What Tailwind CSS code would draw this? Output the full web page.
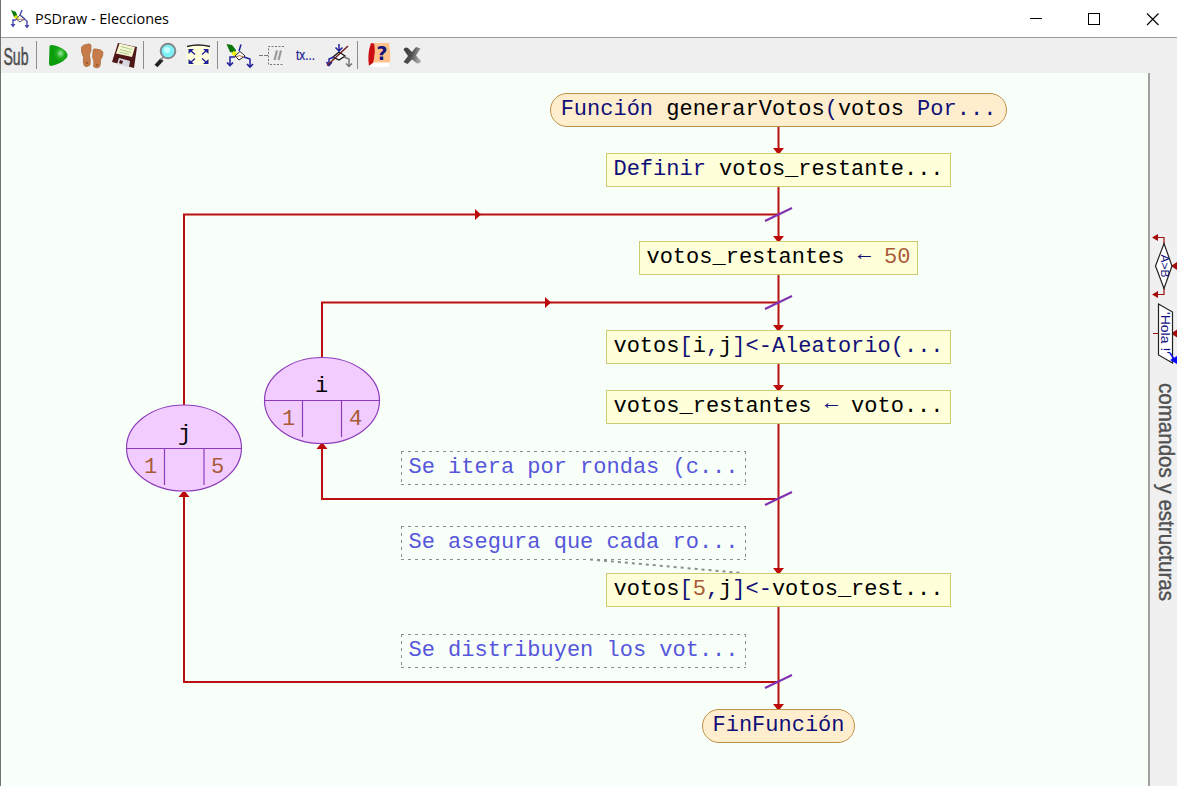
<!DOCTYPE html>
<html lang="es">
<head>
<meta charset="utf-8">
<title>PSDraw - Elecciones</title>
<script src="https://cdn.jsdelivr.net/npm/@tailwindcss/browser@4"></script>
</head>
<body class="w-[1177px] h-[786px] overflow-hidden bg-white">
<div class="flex flex-col h-[786px] border-l border-[#6f7472]">
  <header class="h-[37px] shrink-0 flex items-center bg-white">
    <svg class="ml-[9px] w-5 h-5" viewBox="10 8 20 20" fill="none">
      <path d="M11 9 L16 11 L18 17 L14 16 Z" fill="#087a08"/><path d="M15 15 L18 18" stroke="#e5e500" stroke-width="3"/>
      <path d="M16 19 H13 V24 M24 18 L27 20 V25 M22 9 L20 14 L25 18" stroke="#4848b0" stroke-width="1.4"/>
      <path d="M16 18 L20 14 L24 18 L20 21 Z" stroke="#555580"/><path d="M17 19 Q20 17 24 19" stroke="#b08060"/>
      <path d="M10.500 23 H15.500 L13 26.500 Z M24.500 24 H29.500 L27 27.500 Z" fill="#4848b0"/>
    </svg>
    <h1 class="ml-[5px] w-[138px] text-black font-['Open_Sans',sans-serif]"><svg class="block overflow-visible" width="138" height="20"><text x="0" y="15" font-size="15" textLength="134" lengthAdjust="spacingAndGlyphs">PSDraw - Elecciones</text></svg></h1>
    <div class="ml-auto flex">
      <svg class="w-[58px] h-9" viewBox="1007 0 58 36"><path d="M1030 17.5 H1042" stroke="#000"/></svg>
      <svg class="w-[58px] h-9" viewBox="1065 0 58 36"><rect x="1088.5" y="12.5" width="11" height="11" fill="none" stroke="#000"/></svg>
      <svg class="w-[54px] h-9" viewBox="1123 0 54 36"><path d="M1147 12.500 L1158.500 24 M1158.500 12.500 L1147 24" stroke="#000" stroke-width="1.1"/></svg>
    </div>
  </header>

  <nav class="h-9 shrink-0 flex bg-[#efefef] border-t border-[#999d99]">
    <svg class="w-[34px] h-[35px] overflow-visible" viewBox="1 38 34 35"><text x="3.500" y="64.500" font-family="Liberation Sans, sans-serif" font-size="23" fill="#4c4c4c" stroke="#4c4c4c" stroke-width=".5" textLength="25" lengthAdjust="spacingAndGlyphs">Sub</text></svg>
    <div class="ml-px w-px h-7 mt-[3px] bg-[#8c8c8c]"></div>
    <svg class="w-[36px] h-[35px]" viewBox="37 38 36 35">
      <defs><radialGradient id="play" cx=".62" cy=".4" r=".4"><stop offset="0" stop-color="#a0e8a0"/><stop offset=".55" stop-color="#1fae1f"/><stop offset="1" stop-color="#0c9d0c"/></radialGradient></defs>
      <path d="M49.500 47 Q49 45 52 45 Q60 46 65.500 51 Q69 55 66.500 58 Q61 64 51 66 Q49 66 49 63 Z" fill="url(#play)"/>
    </svg>
    <svg class="w-[34px] h-[35px]" viewBox="73 38 34 35" fill="#c77b4a" stroke="#a35f34" stroke-width=".6">
      <path d="M81.500 47 Q83 44.500 86 44.500 Q89.500 43 91 45 Q92 50 89.500 55 Q91 61 90 65 Q87 68 84.500 66 Q82.500 63 83.500 57 Q80.500 52 81.500 47Z"/>
      <path d="M93 51 Q93 48 96 49 Q101 49 103 52 Q103.500 56 100.500 60 Q101 64 99.500 67 Q96 69 93.500 66.500 Q94.500 61 92.500 57Z"/>
      <circle cx="87" cy="63" r="1" fill="#8e4e2a"/><circle cx="97" cy="65" r="1" fill="#8e4e2a"/>
    </svg>
    <svg class="w-[36px] h-[35px]" viewBox="107 38 36 35">
      <path d="M118 43 L137 47 L134 68 L112 62 Z" fill="#4d1717"/><path d="M119.500 43.500 L135 47 L132 57 L116 53.500 Z" fill="#f6f5d2"/>
      <path d="M121 46.500 L132 49.500 M120 49.500 L131 52.500 M119.500 52 L129 54.500" stroke="#aecb91"/><path d="M119 58 L130 61 L129 67 L117 64 Z" fill="#d8d8e0"/><path d="M120 60 L123 61 L122 64 L119 63Z" fill="#4d1717"/>
    </svg>
    <div class="w-px h-7 mt-[3px] bg-[#8c8c8c]"></div>
    <svg class="w-[36px] h-[35px]" viewBox="144 38 36 35">
      <path d="M162 59.500 L156 66" stroke="#222" stroke-width="4"/><path d="M164 56 L161 60" stroke="#999" stroke-width="2"/>
      <circle cx="168" cy="51" r="7.300" fill="#7df2f6" stroke="#85878c" stroke-width="2"/><circle cx="167" cy="50" r="3" fill="#c4ffff"/>
    </svg>
    <svg class="w-[37px] h-[35px]" viewBox="180 38 37 35">
      <path d="M187 46.500 Q198 43.500 210 46.500 V65 H187Z" fill="#ffffdc"/><path d="M187 46.500 Q198 43.500 210 46.500" fill="none" stroke="#222" stroke-width="1.500"/>
      <path d="M195 54.500 L190 50 M202 54.500 L207 50 M195 58.500 L190 63 M202 58.500 L207 63" stroke="#20209a" stroke-width="1.300"/>
      <path d="M188.500 49h5.500l-5.500 5zM208.500 49h-5.500l5.500 5zM188.500 64h5.500l-5.500-5zM208.500 64h-5.500l5.500-5z" fill="#20209a"/>
    </svg>
    <div class="w-px h-7 mt-[3px] bg-[#8c8c8c]"></div>
    <svg class="w-[38px] h-[35px]" viewBox="218 38 38 35" fill="none">
      <path d="M226.500 44 L232 45 L236 50 L235 53 L230 52 Z" fill="#087608"/><path d="M232.500 52.500 L236.500 55" stroke="#f1ed15" stroke-width="4"/>
      <path d="M235 56 L240 51.500 L245 56 L239 60 Z" fill="#fff" stroke="#222"/><path d="M236 57 Q240 54 243 57" stroke="#b86533"/>
      <path d="M241 44.500 L239 51 M235 57 H230 V64 M244 57 L250 59 V66" stroke="#20209a" stroke-width="1.500"/><path d="M227 62.500 L230 65.500 L233 62.500 M247 64 L250 67 L253 64" stroke="#20209a" stroke-width="1.700"/>
    </svg>
    <svg class="w-[33px] h-[35px]" viewBox="256 38 33 35" fill="none" stroke="#777">
      <path d="M259 55.500 H268" stroke-dasharray="4 1"/><path d="M284 46.500 H268.500 V64.500 H284" stroke-dasharray="2 1.500"/><path d="M277 50.500 L274.500 60 M281 50.500 L278.500 60" stroke="#9b9b9b" stroke-width="2.200"/>
    </svg>
    <svg class="w-[33px] h-[35px] overflow-visible" viewBox="289 38 33 35"><text x="296" y="60" font-family="Liberation Sans, sans-serif" font-size="14" fill="#20208a" stroke="#20208a" stroke-width=".2" textLength="19" lengthAdjust="spacingAndGlyphs">tx...</text></svg>
    <svg class="w-[35px] h-[35px]" viewBox="322 38 35 35" fill="none">
      <path d="M333 57 L339 52 L345 56 L339 60 Z" fill="#fff" stroke="#111" stroke-width="1.300"/><path d="M339 44 V50 M335.500 47.500 L339 51 L342.500 47.500 M334 57 L329 59 V64 M326.500 62 L329 65.500 L332 62" stroke="#20209a" stroke-width="1.500"/>
      <path d="M344 57 L349 59 V66 M346 63.500 L349 66.500 L352 63.500" stroke="#777" stroke-width="1.500"/><path d="M327 65.500 L348 46" stroke="#6d2020" stroke-width="1.500"/>
    </svg>
    <div class="w-px h-7 mt-[3px] bg-[#8c8c8c]"></div>
    <svg class="w-[36px] h-[35px]" viewBox="358 38 36 35">
      <path d="M371 43 Q367 54 369 66 L374 62 L376 44 Z" fill="#c90d10"/><path d="M374 43 H389 Q391 53 390 63 H373 Q376 53 374 43Z" fill="#ffc28d"/><path d="M369 66 L374 62.500 H390 L388 67 H370Z" fill="#fff"/>
      <text x="376.500" y="60" font-family="DejaVu Sans, sans-serif" font-size="19" font-weight="700" fill="#12127e">?</text>
    </svg>
    <svg class="w-[36px] h-[35px]" viewBox="394 38 36 35">
      <defs><linearGradient id="close" x1="0" y1="0" x2="1" y2=".3"><stop stop-color="#3a3a3a"/><stop offset=".55" stop-color="#505050"/><stop offset="1" stop-color="#a5a5a5"/></linearGradient></defs>
      <path d="M403.500 49.500 Q405 46.500 408 48 L412 52 L416 47 L420.500 48.500 L416 55.500 L421 61 Q420 64 417 63.500 L412 59.500 L407.500 64 L403.500 62 L408 56 Z" fill="url(#close)"/>
    </svg>
  </nav>

  <div class="flex-1 min-h-0 flex">
    <main class="relative flex-1 bg-[#f8fff8] font-['Liberation_Mono',monospace] text-[22px] leading-8 text-black whitespace-pre">
      <svg class="absolute left-0 top-0" width="1147" height="713" viewBox="1 73 1147 713" fill="none">
        <g stroke="#bb1010" stroke-width="2">
          <path d="M778.500 126 V150 M778.500 187 V238 M778.500 275 V326 M778.500 363 V388 M778.500 424 V570 M778.500 607 V706"/>
          <path d="M778 214.500 H184 V405 M184 492 V682 H778"/>
          <path d="M778 302.500 H322 V358 M322 445 V499 H778"/>
        </g>
        <g fill="#bb0808">
          <path d="M773 148h11l-4 5h-3zM773 236h11l-4 5h-3zM773 325h11l-4 5h-3zM773 385h11l-4 5h-3zM773 568h11l-4 5h-3zM773 704h11l-4 5h-3z"/>
          <path d="M475 209v11l6-5.500zM545 297v11l6-5.500zM178.500 497h11l-4-5h-3zM316.500 449h11l-4-5h-3z"/>
        </g>
        <path d="M765 221 L792 208 M765 309 L792 296 M765 505 L792 492 M765 688 L792 675" stroke="#8030b0" stroke-width="2"/>
        <g stroke="#8a8f8a"><path stroke-dasharray="3 4" d="M401 451.500H746M401 484.500H746M401 526.500H746M401 559.500H746M401 634.500H746M401 667.500H746M401.500 451V485M745.500 451V485M401.500 526V560M745.500 526V560M401.500 634V668M745.500 634V668"/>
        <path d="M590 559.500 L742 573" stroke-width="2" stroke-dasharray="3 4"/></g>
        <g fill="#f2ccff" stroke="#8c3cba" stroke-width="1.200">
          <ellipse cx="184" cy="448" rx="57.500" ry="43"/><path d="M126.500 448.500H242M164.500 448.500V485M204 448.500V485"/>
          <ellipse cx="322" cy="400.500" rx="57.500" ry="43"/><path d="M264.500 400.500H380M302.500 400.500V437M341.500 400.500V437"/>
        </g>
      </svg>

      <div class="absolute left-[549px] top-5 w-[457px] h-[34px] rounded-[17px] border border-[#c09048] bg-[#ffeecd] flex justify-center items-center text-[#101078]"><p>Función <span class="text-black">generarVotos</span>(<span class="text-black">votos</span> Por...</p></div>
      <div class="absolute left-[605px] top-20 w-[345px] h-[34px] border border-[#cbcb72] bg-[#ffffda] flex justify-center items-center"><p><span class="text-[#101078]">Definir</span> votos_restante...</p></div>
      <div class="absolute left-[638px] top-[168px] w-[279px] h-[34px] border border-[#cbcb72] bg-[#ffffda] flex justify-center items-center"><p>votos_restantes <span class="relative -top-[3px] text-[#101078]">←</span> <span class="text-[#a85a38]">50</span></p></div>
      <div class="absolute left-[605px] top-[257px] w-[345px] h-[34px] border border-[#cbcb72] bg-[#ffffda] flex justify-center items-center text-[#101078]"><p><span class="text-black">votos</span>[<span class="text-black">i</span>,<span class="text-black">j</span>]&lt;-Aleatorio(...</p></div>
      <div class="absolute left-[605px] top-[317px] w-[345px] h-[34px] border border-[#cbcb72] bg-[#ffffda] flex justify-center items-center"><p>votos_restantes <span class="relative -top-[3px] text-[#101078]">←</span> voto...</p></div>
      <div class="absolute left-[605px] top-[500px] w-[345px] h-[34px] border border-[#cbcb72] bg-[#ffffda] flex justify-center items-center"><p>votos<span class="text-[#101078]">[</span><span class="text-[#a85a38]">5</span><span class="text-[#101078]">,</span>j<span class="text-[#101078]">]&lt;-</span>votos_rest...</p></div>
      <div class="absolute left-[701px] top-[636px] w-[153px] h-[34px] rounded-[17px] border border-[#c09048] bg-[#ffeecd] flex justify-center items-center text-[#101078]">FinFunción</div>

      <div class="absolute left-[400px] top-[378px] w-[345px] h-[34px] flex justify-center items-center text-[#5656dc]">Se itera por rondas (c...</div>
      <div class="absolute left-[400px] top-[453px] w-[345px] h-[34px] flex justify-center items-center text-[#5656dc]">Se asegura que cada ro...</div>
      <div class="absolute left-[400px] top-[561px] w-[345px] h-[34px] flex justify-center items-center text-[#5656dc]">Se distribuyen los vot...</div>

      <div class="absolute left-[177px] top-[346px]">j</div>
      <div class="absolute left-[143px] top-[379px] text-[#a85a38]">1</div>
      <div class="absolute left-[210px] top-[379px] text-[#a85a38]">5</div>
      <div class="absolute left-[314px] top-[298px]">i</div>
      <div class="absolute left-[281px] top-[331px] text-[#a85a38]">1</div>
      <div class="absolute left-[348px] top-[331px] text-[#a85a38]">4</div>
    </main>

    <aside class="w-[29px] shrink-0 bg-[#f0f0f0] border-l-2 border-[#a0a0a0]">
      <svg width="27" height="713" viewBox="1150 73 27 713" font-family="Liberation Sans, sans-serif">
        <g fill="none" stroke="#9b1010" stroke-width="1.200"><path d="M1164 244 V237.500 H1156 M1164 288 V294.500 H1156 M1174 266H1177 M1153 333.500H1177"/></g>
        <path d="M1152 237.500l6-3.500v7zM1152 294.500l6-3.500v7zM1171 266l6-4v8zM1171 333.500l6-4v8z" fill="#a30c0c"/>
        <g fill="#fff" stroke="#222" stroke-width="1.200"><path d="M1164 243.500 L1172 266 L1164 288.500 L1155.500 266 Z"/><path d="M1158.500 304 L1172.500 312 V363 L1158.500 355 Z"/></g>
        <text transform="translate(1160.500 254.500) rotate(90)" font-size="11" fill="#101080" textLength="23" lengthAdjust="spacingAndGlyphs">A&gt;B</text>
        <text transform="translate(1161 312) rotate(90)" font-size="13" fill="#101080" textLength="42" lengthAdjust="spacingAndGlyphs">'Hola !'</text>
        <path d="M1170 353 L1176 362" stroke="#1818e8" stroke-width="1.500"/><path d="M1177 356 V364 L1170 360Z" fill="#0909ff"/>
        <text transform="translate(1158.500 383) rotate(90)" font-size="22" fill="#505050" stroke="#505050" stroke-width=".4" textLength="218" lengthAdjust="spacingAndGlyphs">comandos y estructuras</text>
      </svg>
    </aside>
  </div>
</div>
</body>
</html>
